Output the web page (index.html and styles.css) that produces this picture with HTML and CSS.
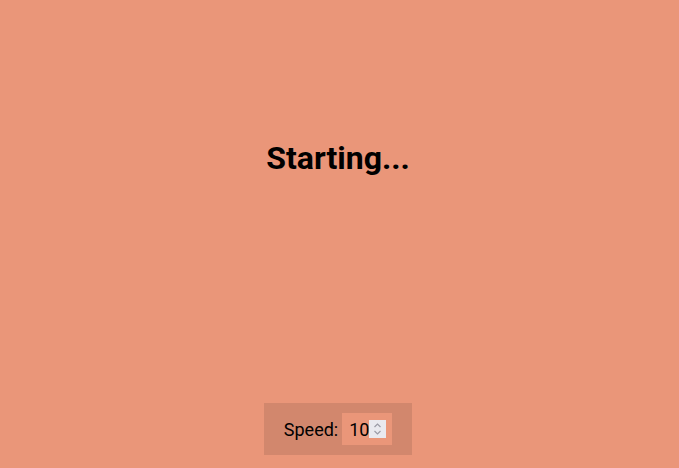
FILE: index.html
```html
<!DOCTYPE html>
<html>
<head>
<meta charset="utf-8">
<link rel="stylesheet" href="styles.css">
</head>
<body>
<div class="app">
  <main class="stage">
    <h1 class="status">Starting...</h1>
  </main>
  <div class="controls">
    <label class="speed-label" for="speed">Speed:</label>
    <div class="number-field">
      <input class="speed-input" id="speed" type="number" value="10">
      <span class="spinner" aria-hidden="true">
        <svg width="17" height="18" viewBox="0 0 17 18">
          <path d="M5.5 7 L8.5 4 L11.5 7" fill="none" stroke="#9b9ba6" stroke-width="1.2"/>
          <path d="M5.5 11 L8.5 14 L11.5 11" fill="none" stroke="#9b9ba6" stroke-width="1.2"/>
        </svg>
      </span>
    </div>
  </div>
</div>
</body>
</html>
```
FILE: styles.css
```css
html, body {
  margin: 0;
  padding: 0;
  height: 100%;
}
body {
  background: #ea9679;
  font-family: Roboto, "Liberation Sans", sans-serif;
  color: #000;
}
.app {
  height: 100%;
  display: flex;
  flex-direction: column;
  align-items: center;
  box-sizing: border-box;
  padding: 0 3px 13px 0;
}
.stage {
  flex: 1;
  width: 100%;
  display: flex;
  justify-content: center;
  align-items: flex-start;
  padding-top: 139px;
  box-sizing: border-box;
}
.status {
  margin: 0;
  font-size: 32px;
  font-weight: 700;
  line-height: 38px;
}
.controls {
  display: flex;
  align-items: center;
  gap: 4px;
  background: #d2876d;
  padding: 10px 20px;
}
.speed-label {
  font-size: 18px;
}
.number-field {
  width: 50px;
  height: 32px;
  display: flex;
  align-items: center;
  background: #ea9679;
  padding: 0 6px 0 7px;
  box-sizing: border-box;
}
.speed-input {
  width: 20px;
  flex: none;
  border: none;
  background: transparent;
  font-family: Roboto, "Liberation Sans", sans-serif;
  font-size: 18px;
  padding: 0;
  margin: 0;
  color: #000;
  outline: none;
  -moz-appearance: textfield;
}
.speed-input::-webkit-inner-spin-button,
.speed-input::-webkit-outer-spin-button {
  -webkit-appearance: none;
  margin: 0;
}
.spinner {
  width: 17px;
  height: 18px;
  background: #e9e9ef;
  display: flex;
}
```
